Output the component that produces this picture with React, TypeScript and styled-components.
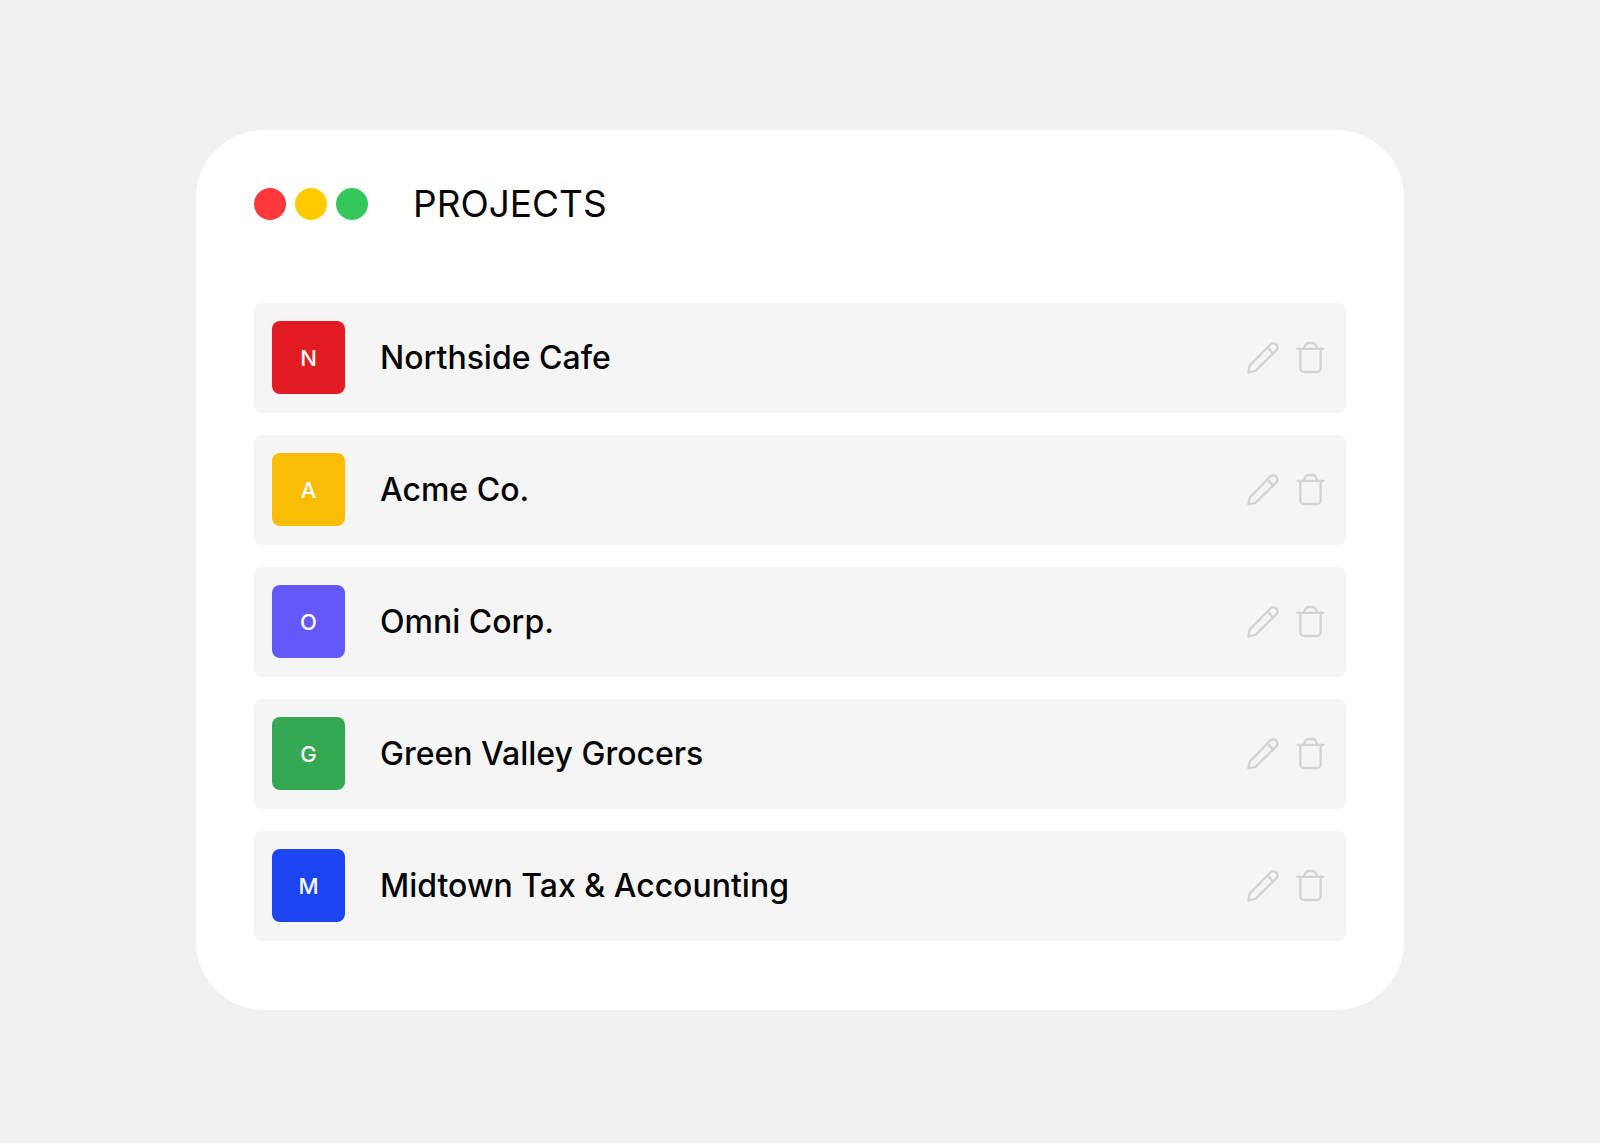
import React from "react";
import styled, { createGlobalStyle } from "styled-components";

const GlobalStyle = createGlobalStyle`
  *, *::before, *::after { box-sizing: border-box; }
  body {
    margin: 0;
    background: #f1f1f1;
    color: #050505;
    font-family: Inter, "Liberation Sans", sans-serif;
  }
`;

const Page = styled.main`
  padding: 130px 196px;
`;

const Card = styled.section`
  padding: 56px 58px 69px;
  border-radius: 68px;
  background: #ffffff;
`;

const Header = styled.header`
  display: flex;
  align-items: center;
  gap: 45px;
  height: 36px;
  margin-bottom: 81px;
`;

const WindowControls = styled.div`
  display: flex;
  gap: 9px;
`;

const WindowButton = styled.button<{ $color: string }>`
  width: 32px;
  height: 32px;
  padding: 0;
  border: 0;
  border-radius: 50%;
  background: ${(p) => p.$color};
  cursor: pointer;
`;

const Title = styled.h1`
  margin: 0;
  font-size: 37px;
  font-weight: 400;
  line-height: 36px;
`;

const ProjectList = styled.ul`
  display: flex;
  flex-direction: column;
  gap: 22px;
  margin: 0;
  padding: 0;
  list-style: none;
`;

const ProjectRow = styled.li`
  display: flex;
  align-items: center;
  min-height: 110px;
  padding: 18px 21px 19px 18px;
  border-radius: 8px;
  background: #f5f5f5;
`;

const Avatar = styled.span<{ $color: string }>`
  display: grid;
  place-items: center;
  width: 73px;
  height: 73px;
  border-radius: 8px;
  background: ${(p) => p.$color};
  color: #ffffff;
  font-size: 22px;
  font-weight: 500;
  line-height: 24px;
`;

const ProjectName = styled.span`
  flex: 1;
  margin-left: 35px;
  font-size: 32px;
  font-weight: 500;
  line-height: 40px;
`;

const Actions = styled.div`
  display: flex;
  gap: 17px;
`;

const IconButton = styled.button`
  display: flex;
  padding: 0;
  border: 0;
  background: none;
  color: #d3d3d3;
  cursor: pointer;
`;

const Icon = styled.svg`
  fill: none;
  stroke: currentColor;
  stroke-width: 2.4;
  stroke-linecap: round;
  stroke-linejoin: round;
`;

const PencilIcon = () => (
  <Icon width="33" height="33" viewBox="0 0 34 34" aria-hidden="true">
    <path d="M2.4 32.3 3.8 25.4 25 3.6a4.3 4.3 0 0 1 6.2 6L9.6 30.8Z" />
    <path d="m22 6.8 6 6" />
  </Icon>
);

const TrashIcon = () => (
  <Icon width="29" height="33" viewBox="0 0 30 34" aria-hidden="true">
    <path d="M1.6 8h26.8" />
    <path d="M8 8c1.2-4 2.4-6 4.6-6h4.8c2.2 0 3.4 2 4.6 6" />
    <path d="M4.5 8v20a4 4 0 0 0 4 4h13a4 4 0 0 0 4-4V8" />
  </Icon>
);

const controls = [
  { label: "Close", color: "#ff383c" },
  { label: "Minimize", color: "#ffcc00" },
  { label: "Zoom", color: "#34c759" },
];

const projects = [
  { name: "Northside Cafe", color: "#e31b23" },
  { name: "Acme Co.", color: "#fbbc05" },
  { name: "Omni Corp.", color: "#6558fb" },
  { name: "Green Valley Grocers", color: "#34a853" },
  { name: "Midtown Tax & Accounting", color: "#1a45f0" },
];

export default function App() {
  return (
    <>
      <GlobalStyle />
      <Page>
        <Card>
          <Header>
            <WindowControls>
              {controls.map((c) => (
                <WindowButton key={c.label} type="button" aria-label={c.label} $color={c.color} />
              ))}
            </WindowControls>
            <Title>PROJECTS</Title>
          </Header>
          <ProjectList>
            {projects.map((p) => (
              <ProjectRow key={p.name}>
                <Avatar $color={p.color}>{p.name[0]}</Avatar>
                <ProjectName>{p.name}</ProjectName>
                <Actions>
                  <IconButton type="button" aria-label={`Edit ${p.name}`}>
                    <PencilIcon />
                  </IconButton>
                  <IconButton type="button" aria-label={`Delete ${p.name}`}>
                    <TrashIcon />
                  </IconButton>
                </Actions>
              </ProjectRow>
            ))}
          </ProjectList>
        </Card>
      </Page>
    </>
  );
}
